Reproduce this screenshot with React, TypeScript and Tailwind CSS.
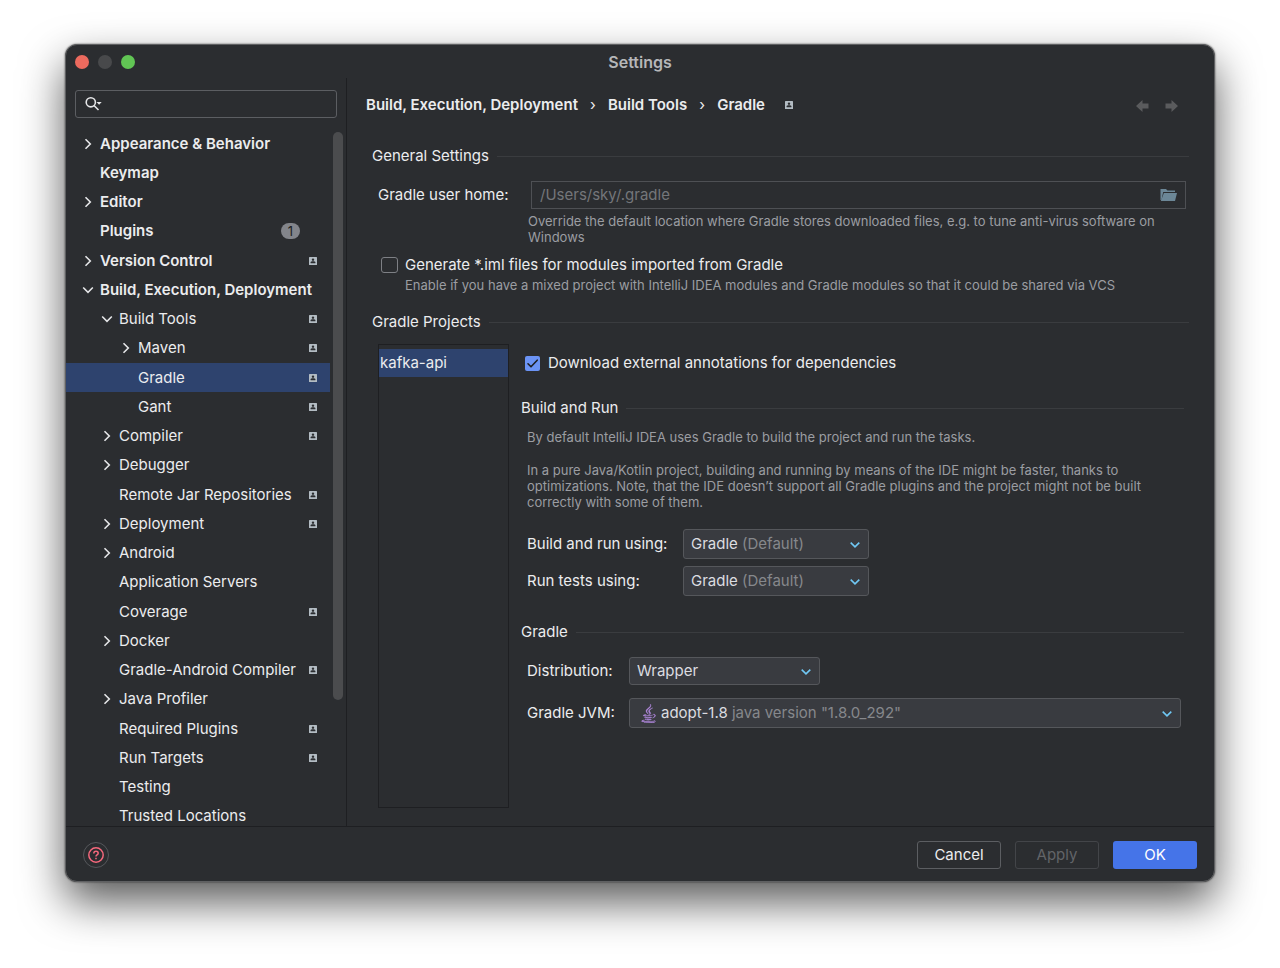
import React from 'react';
import { FaJava } from 'react-icons/fa';
import clsx from 'clsx';

type TreeItem = {
  label: string;
  level: 0 | 1 | 2;
  arrow?: 'right' | 'down';
  project?: boolean;
  badge?: number;
  selected?: boolean;
};

const treeItems: TreeItem[] = [
  { label: 'Appearance & Behavior', level: 0, arrow: 'right' },
  { label: 'Keymap', level: 0 },
  { label: 'Editor', level: 0, arrow: 'right' },
  { label: 'Plugins', level: 0, badge: 1 },
  { label: 'Version Control', level: 0, arrow: 'right', project: true },
  { label: 'Build, Execution, Deployment', level: 0, arrow: 'down' },
  { label: 'Build Tools', level: 1, arrow: 'down', project: true },
  { label: 'Maven', level: 2, arrow: 'right', project: true },
  { label: 'Gradle', level: 2, project: true, selected: true },
  { label: 'Gant', level: 2, project: true },
  { label: 'Compiler', level: 1, arrow: 'right', project: true },
  { label: 'Debugger', level: 1, arrow: 'right' },
  { label: 'Remote Jar Repositories', level: 1, project: true },
  { label: 'Deployment', level: 1, arrow: 'right', project: true },
  { label: 'Android', level: 1, arrow: 'right' },
  { label: 'Application Servers', level: 1 },
  { label: 'Coverage', level: 1, project: true },
  { label: 'Docker', level: 1, arrow: 'right' },
  { label: 'Gradle-Android Compiler', level: 1, project: true },
  { label: 'Java Profiler', level: 1, arrow: 'right' },
  { label: 'Required Plugins', level: 1, project: true },
  { label: 'Run Targets', level: 1, project: true },
  { label: 'Testing', level: 1 },
  { label: 'Trusted Locations', level: 1 },
];

const levelPadding = { 0: 'pl-[14px]', 1: 'pl-[33px]', 2: 'pl-[52px]' };

const TreeArrow: React.FC<{ direction?: 'right' | 'down' }> = ({ direction }) => (
  <svg viewBox="0 0 16 16" className="h-4 w-4 shrink-0" fill="none" stroke="#e6e7e9" strokeWidth="1.6">
    {direction === 'right' && <path d="M5.5 3.2 10.3 8 5.5 12.8" />}
    {direction === 'down' && <path d="M3.2 5.5 8 10.3 12.8 5.5" />}
  </svg>
);

// Marks pages whose settings belong to the current project
const ProjectIcon: React.FC = () => (
  <svg viewBox="0 0 24 24" className="h-2 w-2 shrink-0">
    <rect width="24" height="24" rx="1.5" fill="#b3bcc3" />
    <circle cx="12" cy="8" r="3.6" fill="#2b2d30" />
    <path d="M5 18.500v-3c0-1.500 3-2.500 7-2.500s7 1 7 2.500v3z" fill="#2b2d30" />
  </svg>
);

const HistoryArrow: React.FC<{ forward?: boolean }> = ({ forward }) => (
  <svg viewBox="0 0 14 14" className="h-[14px] w-[14px]" fill="#5a5b5d">
    {forward ? <path d="M0.500 5.500h6V2l6.500 6-6.500 6V10.500h-6z" /> : <path d="M13.500 5.500h-6V2L1 8l6.500 6V10.500h6z" />}
  </svg>
);

const SectionTitle: React.FC<{ children: React.ReactNode }> = ({ children }) => (
  <div className="flex h-5 items-center gap-2">
    <h2>{children}</h2>
    <div className="h-px flex-1 bg-[#3a3c3f]" />
  </div>
);

type DropdownProps = {
  id: string;
  value: string;
  hint?: string;
  icon?: React.ReactNode;
  className?: string;
};

const Dropdown: React.FC<DropdownProps> = ({ id, value, hint, icon, className }) => (
  <div className={clsx('relative rounded-[3px] border border-[#55575b] bg-[#393b40]', className)}>
    <select id={id} className="h-full w-full appearance-none bg-transparent text-transparent outline-none">
      <option>{hint ? `${value} ${hint}` : value}</option>
    </select>
    <div className="pointer-events-none absolute inset-0 flex items-center pr-[7px] pl-[7px]" aria-hidden="true">
      {icon}
      <span className="whitespace-pre text-[#dcdde0]">{value}</span>
      {hint && <span className="whitespace-pre text-[#86888c]"> {hint}</span>}
      <svg viewBox="0 0 12 12" className="ml-auto h-3 w-3" fill="none" stroke="#70c8f4" strokeWidth="1.600">
        <path d="M1.700 4.700 6 8.800 10.300 4.700" />
      </svg>
    </div>
  </div>
);

const Sidebar: React.FC = () => (
  <aside className="flex w-[281px] shrink-0 flex-col border-r border-[#1e1f22] pt-3">
    <div className="mr-[9px] ml-[9px] flex h-7 shrink-0 items-center rounded-[3px] border border-[#5c5e62] pl-[9px]">
      <svg viewBox="0 0 18 16" className="h-4 w-[18px] shrink-0" fill="none" stroke="#e6e7e9" strokeWidth="1.600">
        <circle cx="5.800" cy="6.300" r="4.600" />
        <path d="M9 9.500 13.500 14" />
        <path d="M11.500 6h5.200l-2.600 2.800z" fill="#e6e7e9" stroke="none" />
      </svg>
      <input type="text" aria-label="Search settings" className="h-full w-full min-w-0 bg-transparent px-1 outline-none" />
    </div>
    <div className="mt-[11px] flex min-h-0 flex-1">
      <ul className="grid h-[702px] flex-1 auto-rows-fr">
        {treeItems.map((item) => (
          <li
            key={item.label}
            className={clsx(
              'flex items-center gap-1 pr-[13px] whitespace-nowrap',
              levelPadding[item.level],
              item.level === 0 && 'font-semibold',
              item.selected && 'bg-[#2e436e]'
            )}
          >
            <TreeArrow direction={item.arrow} />
            <span className="flex-1">{item.label}</span>
            {item.badge && (
              <span className="mr-[17px] flex h-4 w-[19px] items-center justify-center rounded-full bg-[#83858b] text-[13px] font-normal text-[#1e1f22]">
                {item.badge}
              </span>
            )}
            {item.project && <ProjectIcon />}
          </li>
        ))}
      </ul>
      <div className="mx-[3px] mt-[3px] h-[568px] w-[10px] rounded-full bg-[#4b4c4e]" />
    </div>
  </aside>
);

const Breadcrumb: React.FC = () => (
  <div className="flex h-6 items-center pr-[35px] pl-[19px]">
    <nav className="flex items-center font-semibold">
      <a href="#build">Build, Execution, Deployment</a>
      <span className="w-[30px] text-center font-normal">›</span>
      <a href="#tools">Build Tools</a>
      <span className="w-[30px] text-center font-normal">›</span>
      <a href="#gradle">Gradle</a>
    </nav>
    <div className="pl-5">
      <ProjectIcon />
    </div>
    <div className="ml-auto flex gap-4">
      <button type="button" aria-label="Back">
        <HistoryArrow />
      </button>
      <button type="button" aria-label="Forward">
        <HistoryArrow forward />
      </button>
    </div>
  </div>
);

const GeneralSettings: React.FC = () => (
  <section>
    <SectionTitle>General Settings</SectionTitle>
    <div className="mt-[15px] flex items-center pr-[3px] pl-[6px]">
      <label htmlFor="home" className="w-[153px] shrink-0">
        Gradle user home:
      </label>
      <div className="flex h-7 flex-1 items-center border border-[#4e5054] pr-2 pl-2">
        <input
          id="home"
          type="text"
          placeholder="/Users/sky/.gradle"
          className="min-w-0 flex-1 bg-transparent outline-none placeholder:text-[#74767a]"
        />
        <button type="button" aria-label="Browse">
          <svg viewBox="0 0 17 14" className="h-[14px] w-[17px]" fill="#6c8797">
            <path d="M0.500 12V1h5.500l1.500 1.500H15V4H3.200L1.500 12z" />
            <path d="M3.900 5H17l-2 8H0.800z" />
          </svg>
        </button>
      </div>
    </div>
    <p className="mt-1 pl-[156px] text-[13px] leading-4 text-[#9b9da2]">
      Override the default location where Gradle stores downloaded files, e.g. to tune anti-virus software on Windows
    </p>
    <div className="mt-[10px] flex h-5 items-center pl-[9px]">
      <input
        id="iml"
        type="checkbox"
        className="h-4 w-[17px] shrink-0 appearance-none rounded-[3px] border border-[#7e8085]"
      />
      <label htmlFor="iml" className="pl-[7px]">
        Generate *.iml files for modules imported from Gradle
      </label>
    </div>
    <p className="mt-[2px] pl-[33px] text-[13px] leading-4 text-[#9b9da2]">
      Enable if you have a mixed project with IntelliJ IDEA modules and Gradle modules so that it could be shared via VCS
    </p>
  </section>
);

const ProjectSettings: React.FC = () => (
  <div className="min-w-0 flex-1 pr-[5px]">
    <div className="mt-[9px] flex h-5 items-center pl-1">
      <span className="relative h-[15px] w-[15px] shrink-0">
        <input id="annotations" type="checkbox" defaultChecked className="block h-full w-full appearance-none rounded-[2px] bg-[#6b93f5]" />
        <svg
          viewBox="0 0 15 15"
          className="pointer-events-none absolute inset-0"
          fill="none"
          stroke="#1e1f22"
          strokeWidth="1.600"
          strokeLinecap="round"
          strokeLinejoin="round"
        >
          <path d="M3 7.800 6 10.800 12.200 4.200" />
        </svg>
      </span>
      <label htmlFor="annotations" className="pl-2">
        Download external annotations for dependencies
      </label>
    </div>

    <div className="mt-[25px]">
      <SectionTitle>Build and Run</SectionTitle>
    </div>
    <div className="mt-[11px] pl-[6px] text-[13px] leading-4 text-[#9b9da2]">
      <p>By default IntelliJ IDEA uses Gradle to build the project and run the tasks.</p>
      <p className="mt-[17px]">
        In a pure Java/Kotlin project, building and running by means of the IDE might be faster, thanks to
        optimizations. Note, that the IDE doesn’t support all Gradle plugins and the project might not be built
        correctly with some of them.
      </p>
    </div>
    <div className="mt-[19px] grid grid-cols-[156px_186px] items-center gap-y-[7px] pl-[6px]">
      <label htmlFor="build">Build and run using:</label>
      <Dropdown id="build" value="Gradle" hint="(Default)" className="h-[30px]" />
      <label htmlFor="tests">Run tests using:</label>
      <Dropdown id="tests" value="Gradle" hint="(Default)" className="h-[30px]" />
    </div>

    <div className="mt-[26px]">
      <SectionTitle>Gradle</SectionTitle>
    </div>
    <div className="mt-[15px] grid grid-cols-[102px_1fr] items-center gap-y-[13px] pr-[3px] pl-[6px]">
      <label htmlFor="distribution">Distribution:</label>
      <Dropdown id="distribution" value="Wrapper" className="h-7 w-[191px]" />
      <label htmlFor="jvm">Gradle JVM:</label>
      <Dropdown
        id="jvm"
        value="adopt-1.8"
        hint={'java version "1.8.0_292"'}
        className="h-[30px]"
        icon={<FaJava className="mr-[3px] ml-[2px] h-[19px] w-[19px] text-[#b48ae0]" stroke="#b48ae0" strokeWidth="10" />}
      />
    </div>
  </div>
);

const Footer: React.FC = () => (
  <footer className="flex h-[55px] shrink-0 items-center gap-[14px] border-t border-[#1e1f22] px-[17px] pt-0.5">
    <button
      type="button"
      aria-label="Help"
      className="mr-auto flex h-[26px] w-[26px] items-center justify-center rounded-full border border-[#55575b]"
    >
      <svg viewBox="0 0 16 16" className="h-4 w-4" fill="none" stroke="#f5687c" strokeWidth="1.500">
        <circle cx="8" cy="8" r="7.200" />
        <path d="M5.800 6.400C5.800 5 6.800 4.200 8 4.200s2.200.8 2.200 2c0 1.700-2.200 1.700-2.200 3.200" />
        <path d="M8 10.700v1.500" />
      </svg>
    </button>
    <button type="button" className="h-7 w-[84px] rounded-[3px] border border-[#5c5e62]">
      Cancel
    </button>
    <button type="button" disabled className="h-7 w-[84px] rounded-[3px] border border-[#434549] text-[#626468]">
      Apply
    </button>
    <button type="button" className="h-7 w-[84px] rounded-[3px] bg-[#4574e8] text-white">
      OK
    </button>
  </footer>
);

export default function App() {
  return (
    <div className="flex h-screen min-h-[800px] bg-white px-[65px] pt-[44px] pb-[86px] font-['Inter',sans-serif] text-[15px] leading-5 text-[#ebecee]">
      <div className="flex min-w-0 flex-1 flex-col overflow-hidden rounded-[12px] border border-[#5f6062] bg-[#2b2d30] shadow-[0_20px_44px_rgba(0,0,0,0.65),0_0_2px_rgba(0,0,0,0.7)]">
        <header className="relative flex h-[33px] shrink-0 items-center justify-center">
          <div className="absolute left-[9px] flex gap-[9px]">
            <span className="h-[14px] w-[14px] rounded-full bg-[#ec6a5e]" />
            <span className="h-[14px] w-[14px] rounded-full bg-[#48494b]" />
            <span className="h-[14px] w-[14px] rounded-full bg-[#61c554]" />
          </div>
          <h1 className="text-base leading-5 font-semibold text-[#b6b7b9]">Settings</h1>
        </header>
        <div className="flex min-h-0 flex-1">
          <Sidebar />
          <main className="min-w-0 flex-1 overflow-hidden pt-[15px]">
            <Breadcrumb />
            <div className="px-[25px] pt-[29px]">
              <GeneralSettings />
              <section className="mt-[19px]">
                <SectionTitle>Gradle Projects</SectionTitle>
                <div className="mt-3 flex gap-3 pl-[6px]">
                  <ul className="h-[464px] w-[131px] shrink-0 border border-[#1e1f22] pt-1">
                    <li className="flex h-7 items-center bg-[#2e436e] pl-px">kafka-api</li>
                  </ul>
                  <ProjectSettings />
                </div>
              </section>
            </div>
          </main>
        </div>
        <Footer />
      </div>
    </div>
  );
}
